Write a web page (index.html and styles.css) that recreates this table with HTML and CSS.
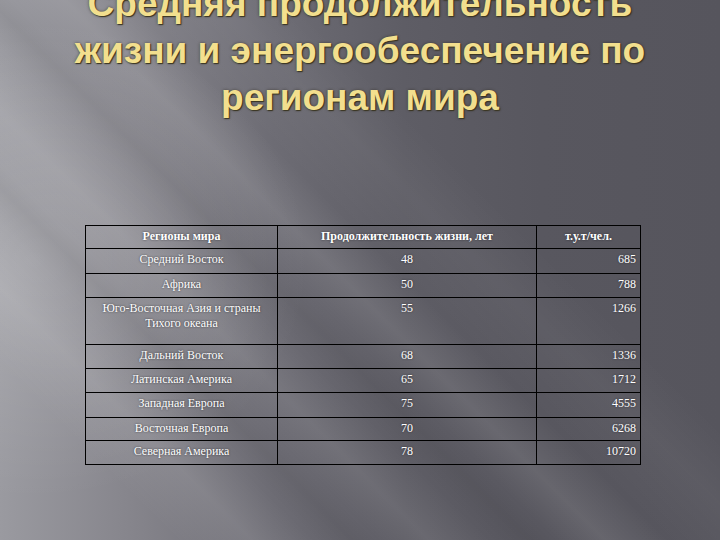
FILE: index.html
```html
<!DOCTYPE html>
<html lang="ru">
<head>
<meta charset="utf-8">
<title>Средняя продолжительность жизни</title>
<link rel="stylesheet" href="styles.css">
</head>
<body>
<div class="slide">
  <h1 class="title">Средняя продолжительность жизни и энергообеспечение по регионам мира</h1>
  <div class="table-wrap">
    <table class="data">
      <colgroup>
        <col class="c-region">
        <col class="c-life">
        <col class="c-energy">
      </colgroup>
      <thead>
        <tr class="head">
          <th>Регионы мира</th>
          <th>Продолжительность жизни, лет</th>
          <th>т.у.т/чел.</th>
        </tr>
      </thead>
      <tbody>
        <tr class="r25"><td>Средний Восток</td><td class="mid">48</td><td class="num">685</td></tr>
        <tr><td>Африка</td><td class="mid">50</td><td class="num">788</td></tr>
        <tr class="tall"><td>Юго-Восточная Азия и страны Тихого океана</td><td class="mid">55</td><td class="num">1266</td></tr>
        <tr><td>Дальний Восток</td><td class="mid">68</td><td class="num">1336</td></tr>
        <tr><td>Латинская Америка</td><td class="mid">65</td><td class="num">1712</td></tr>
        <tr class="r25"><td>Западная Европа</td><td class="mid">75</td><td class="num">4555</td></tr>
        <tr class="r23"><td>Восточная Европа</td><td class="mid">70</td><td class="num">6268</td></tr>
        <tr><td>Северная Америка</td><td class="mid">78</td><td class="num">10720</td></tr>
      </tbody>
    </table>
  </div>
</div>
</body>
</html>
```

FILE: styles.css
```css
html, body {
  margin: 0;
  padding: 0;
}
body {
  width: 720px;
  height: 540px;
  overflow: hidden;
}
.slide {
  width: 720px;
  height: 540px;
  overflow: hidden;
  background:
    linear-gradient(45deg,
      rgba(255,255,255,0) 14%, rgba(255,255,255,0.09) 20%, rgba(255,255,255,0) 25%,
      rgba(0,0,0,0.05) 28%, rgba(255,255,255,0) 30%,
      rgba(255,255,255,0.08) 34%, rgba(255,255,255,0) 39%,
      rgba(0,0,0,0.05) 42%, rgba(255,255,255,0) 44%,
      rgba(255,255,255,0.09) 48%, rgba(255,255,255,0) 53%,
      rgba(255,255,255,0.04) 60%, rgba(255,255,255,0) 66%),
    radial-gradient(ellipse 280px 240px at 30px 260px, rgba(255,255,255,0.16), rgba(255,255,255,0)),
    linear-gradient(90deg, #9a9aa0 0%, #86858c 18%, #6d6c74 38%, #5e5d65 56%, #58575f 75%, #56555d 100%);
}
.title {
  margin: -20px 0 0 0;
  padding: 0 40px;
  font-family: "Liberation Sans", Arial, sans-serif;
  font-weight: bold;
  font-size: 37px;
  line-height: 47px;
  text-align: center;
  color: #f2df8e;
  text-shadow: 1px 1px 1px #3a3520, 0 0 3px rgba(40,35,20,0.6);
}
.table-wrap {
  padding: 104px 0 0 85px;
}
.data {
  border-collapse: collapse;
  table-layout: fixed;
  width: 555px;
  border: 1px solid #000;
  font-family: "Liberation Serif", "Times New Roman", serif;
  font-size: 12px;
  line-height: 15px;
  color: #fff;
  text-shadow: 0 0 2px rgba(40,40,45,0.9);
}
.c-region { width: 192px; }
.c-life { width: 259px; }
.c-energy { width: 104px; }
.data th, .data td {
  border: 1px solid #000;
  padding: 3px 4px 0 4px;
  vertical-align: top;
  text-align: center;
}
.data th {
  font-weight: bold;
}
.data tr { height: 24px; }
.data tr.head { height: 23px; }
.data tr.r25 { height: 25px; }
.data tr.r23 { height: 23px; }
.data tr.tall { height: 47px; }
.data td.num {
  text-align: right;
}
```
